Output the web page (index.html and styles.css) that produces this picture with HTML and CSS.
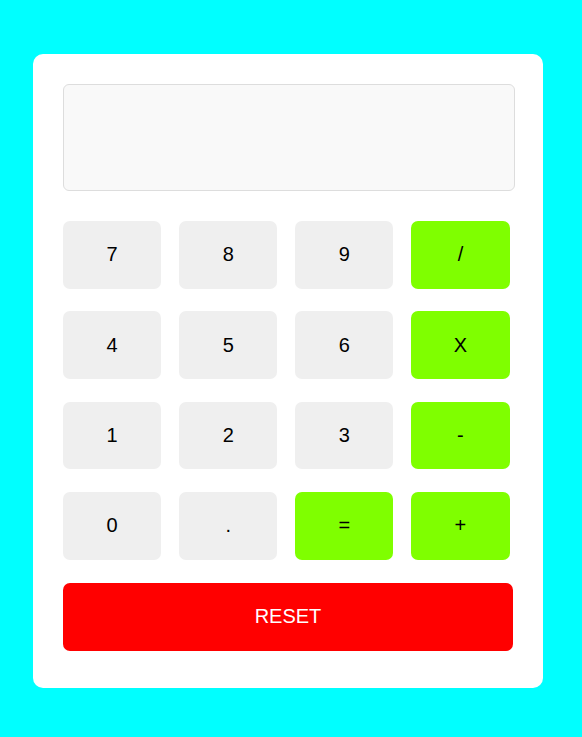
FILE: index.html
```html
<!DOCTYPE html>
<html>
<head>
<meta charset="utf-8">
<link rel="stylesheet" href="styles.css">
</head>
<body>
<div class="calc">
  <div class="display"></div>
  <div class="keys">
    <button class="key">7</button>
    <button class="key">8</button>
    <button class="key">9</button>
    <button class="key op">/</button>
    <button class="key">4</button>
    <button class="key">5</button>
    <button class="key">6</button>
    <button class="key op">X</button>
    <button class="key">1</button>
    <button class="key">2</button>
    <button class="key">3</button>
    <button class="key op">-</button>
    <button class="key">0</button>
    <button class="key">.</button>
    <button class="key op">=</button>
    <button class="key op">+</button>
  </div>
  <button class="reset">RESET</button>
</div>
</body>
</html>
```
FILE: styles.css
```css
html, body {
  margin: 0;
  padding: 0;
}
body {
  background: #00ffff;
  font-family: "Liberation Sans", Arial, sans-serif;
  padding: 54px 0 0 33px;
  height: 737px;
  box-sizing: border-box;
}
.calc {
  width: 450px;
  background: #fff;
  border-radius: 10px;
  padding: 30px 30px 37.5px 30px;
}
.display {
  width: 450px;
  height: 104.5px;
  background: #f9f9f9;
  border: 1px solid #ddd;
  border-radius: 6px;
}
.keys {
  display: grid;
  grid-template-columns: repeat(4, 98.3px);
  grid-auto-rows: 67.7px;
  column-gap: 17.8px;
  row-gap: 22.6px;
  margin-top: 30.5px;
}
.key {
  border: none;
  border-radius: 7px;
  background: #efefef;
  font-family: "Liberation Sans", Arial, sans-serif;
  font-size: 20px;
  color: #000;
  padding: 0;
}
.key.op {
  background: #7fff00;
}
.reset {
  display: block;
  width: 450px;
  height: 67.5px;
  margin-top: 23.5px;
  border: none;
  border-radius: 7px;
  background: #ff0000;
  color: #fff;
  font-family: "Liberation Sans", Arial, sans-serif;
  font-size: 20px;
  padding: 0;
}
```
